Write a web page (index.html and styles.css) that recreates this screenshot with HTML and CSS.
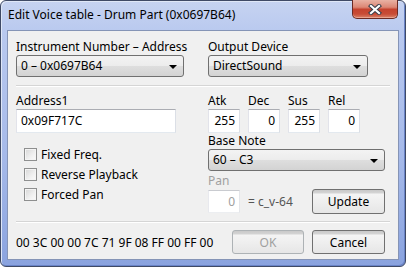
FILE: index.html
```html
<!DOCTYPE html>
<html lang="en">

<head>
    <meta charset="UTF-8">
    <title>Edit Voice table - Drum Part (0x0697B64)</title>
    <link rel="stylesheet" href="styles.css">
</head>

<body>
    <div class="window">
        <div class="titlebar">
            <span class="title">Edit Voice table - Drum Part (0x0697B64)</span>
            <button class="close" aria-label="Close">
                <svg width="14" height="11" viewBox="0 0 14 11">
                    <path d="M3 2 L11 9 M11 2 L3 9" stroke="#3a3f4a" stroke-width="4.2" stroke-linecap="square" fill="none"/>
                    <path d="M3 2 L11 9 M11 2 L3 9" stroke="#ffffff" stroke-width="2.2" stroke-linecap="square" fill="none"/>
                </svg>
            </button>
        </div>

        <div class="client">
            <div class="columns top">
                <div class="field">
                    <label>Instrument Number – Address</label>
                    <div class="select w168">0 – 0x0697B64<span class="arrow"></span></div>
                </div>
                <div class="field">
                    <label>Output Device</label>
                    <div class="select w160">DirectSound<span class="arrow"></span></div>
                </div>
            </div>

            <div class="separator"></div>

            <div class="columns middle">
                <div class="col-left">
                    <label>Address1</label>
                    <div class="edit w160">0x09F717C</div>
                    <ul class="checks">
                        <li><span class="box"></span>Fixed Freq.</li>
                        <li><span class="box"></span>Reverse Playback</li>
                        <li><span class="box"></span>Forced Pan</li>
                    </ul>
                </div>
                <div class="col-right">
                    <div class="adsr">
                        <div class="field"><label>Atk</label><div class="edit num">255</div></div>
                        <div class="field"><label>Dec</label><div class="edit num">0</div></div>
                        <div class="field"><label>Sus</label><div class="edit num">255</div></div>
                        <div class="field"><label>Rel</label><div class="edit num">0</div></div>
                    </div>
                    <label>Base Note</label>
                    <div class="select w177">60 – C3<span class="arrow"></span></div>
                    <label class="disabled pan-label">Pan</label>
                    <div class="pan-row">
                        <div class="edit num disabled">0</div>
                        <span class="formula">= c_v-64</span>
                        <button class="btn">Update</button>
                    </div>
                </div>
            </div>

            <div class="separator low"></div>

            <div class="footer">
                <span class="hex">00 3C 00 00 7C 71 9F 08 FF 00 FF 00</span>
                <button class="btn ok" disabled>OK</button>
                <button class="btn cancel">Cancel</button>
            </div>
        </div>
    </div>
</body>

</html>
```

FILE: styles.css
```css
* {
    box-sizing: border-box;
    margin: 0;
    padding: 0;
}

body {
    width: 406px;
    height: 267px;
    font-family: "Noto Sans", "Open Sans", sans-serif;
    font-size: 12px;
    color: #000;
    background: #fff;
}

.window {
    width: 406px;
    height: 267px;
    display: flex;
    flex-direction: column;
    padding: 0 6px 6px 6px;
    border: 1px solid #3f4a66;
    border-radius: 6px;
    background: linear-gradient(#c6d3f1 0%, #b9c9ef 12%, #a5b9e9 60%, #8aa3df 100%);
    box-shadow: inset 1px 1px 0 #dfe7f7, inset -1px -1px 0 #6a84c8;
}

.titlebar {
    height: 29px;
    display: flex;
    align-items: flex-start;
}

.title {
    padding: 6px 0 0 1px;
    line-height: 16px;
    color: #000;
}

.close {
    margin: -1px 1px 0 auto;
    width: 46px;
    height: 19px;
    display: flex;
    align-items: center;
    justify-content: center;
    border: 1px solid #6b2b24;
    border-top: none;
    border-radius: 0 0 5px 5px;
    background: linear-gradient(#e9b2a4 0%, #dc8775 40%, #c5432f 52%, #c84c36 78%, #d9826a 100%);
    box-shadow: inset 0 -1px 0 #e9a48f;
}

.client {
    flex: 1;
    background: #f0f0f0;
    border: 1px solid #8594b6;
    padding: 8px 8px 0 8px;
}

label {
    display: block;
    line-height: 16px;
}

.disabled {
    color: #a0a0a0;
}

.columns {
    display: grid;
    grid-template-columns: 192px 1fr;
}

.select {
    position: relative;
    height: 22px;
    line-height: 20px;
    padding-left: 4px;
    border: 1px solid #707070;
    border-radius: 3px;
    background: linear-gradient(#f3f3f3 0%, #ececec 50%, #dedede 51%, #d3d3d3 100%);
}

.arrow {
    position: absolute;
    right: 6px;
    top: 9px;
    border-left: 4px solid transparent;
    border-right: 4px solid transparent;
    border-top: 4px solid #000;
}

.w168 { width: 168px; }
.w160 { width: 160px; }
.w177 { width: 177px; }

.separator {
    margin-top: 8px;
    height: 2px;
    border-top: 1px solid #d5d5d5;
    border-bottom: 1px solid #fff;
}

.separator.low {
    margin-top: 7px;
}

.middle {
    margin-top: 6px;
}

.edit {
    height: 24px;
    line-height: 22px;
    padding: 0 4px;
    background: #fff;
    border: 1px solid;
    border-color: #abadb3 #dbdfe6 #e3e9ef #e2e3ea;
}

.edit.num {
    width: 32px;
    text-align: right;
}

.edit.disabled {
    height: 23px;
    border-color: #c9cbd0 #e4e6ea #eceef1 #e8e9ee;
}

.checks {
    list-style: none;
    margin: 11px 0 0 8px;
}

.checks li {
    height: 20px;
    display: flex;
    align-items: center;
    gap: 4px;
}

.box {
    width: 13px;
    height: 13px;
    border: 1px solid #8e8f8f;
    background: linear-gradient(135deg, #d6d6d6 0%, #f0f0f0 60%, #fbfbfb 100%);
    box-shadow: inset 0 0 0 1px #f4f4f4;
}

.adsr {
    display: flex;
    gap: 8px;
}

.pan-label {
    margin-top: 2px;
}

.pan-row {
    height: 25px;
    display: flex;
    align-items: center;
}

.formula {
    margin-left: 8px;
    color: #555;
}

.btn {
    font-family: inherit;
    font-size: 12px;
    color: #000;
    height: 24px;
    width: 73px;
    border: 1px solid #707070;
    border-radius: 3px;
    background: linear-gradient(#c9c9c9 0px, #d4d4d4 3px, #f4f4f4 4px, #efefef 50%, #e6e6e6 100%);
}

.pan-row .btn {
    height: 25px;
    margin-left: auto;
    margin-right: 5px;
}

.btn:disabled {
    color: #a0a0a0;
    border-color: #adb2b5;
}

.footer {
    display: flex;
    align-items: center;
    padding-top: 7px;
}

.hex {
    flex: 1;
}

.ok {
    width: 72px;
}

.cancel {
    margin: 0 5px 0 8px;
}
```
